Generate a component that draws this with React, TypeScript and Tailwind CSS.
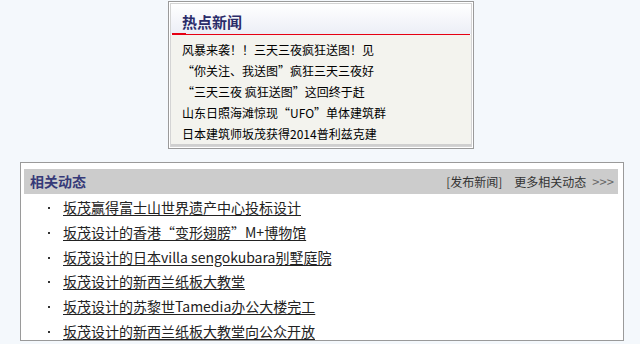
import React from 'react';

const HOT_NEWS = [
  '风暴来袭！！三天三夜疯狂送图！见',
  '“你关注、我送图”疯狂三天三夜好',
  '“三天三夜 疯狂送图”这回终于赶',
  '山东日照海滩惊现“UFO”单体建筑群',
  '日本建筑师坂茂获得2014普利兹克建',
];

const RELATED = [
  '坂茂赢得富士山世界遗产中心投标设计',
  '坂茂设计的香港“变形翅膀”M+博物馆',
  '坂茂设计的日本villa sengokubara别墅庭院',
  '坂茂设计的新西兰纸板大教堂',
  '坂茂设计的苏黎世Tamedia办公大楼完工',
  '坂茂设计的新西兰纸板大教堂向公众开放',
];

const FONT = { fontFamily: "'Noto Sans CJK SC', 'Liberation Sans', sans-serif" };

const HotNews: React.FC = () => (
  <div className="ml-[168px] mt-[1px] w-[306px] h-[148px] border border-[#9a9a9a] bg-white p-[1px]">
    <div className="flex h-full flex-col border border-[#d4d4d4]">
      {/* Header */}
      <div className="h-[30px] bg-gradient-to-b from-white to-[#eceef6] pl-[11px] pt-[8px] text-[15px] font-bold leading-[20px] text-[#2a2c6a]">
        热点新闻
      </div>
      <div className="relative ml-[1px] mr-[1px] h-[1px] bg-[#e60012]">
        <div className="absolute left-0 top-[-1px] h-[2px] w-[14px] bg-[#e60012]" />
      </div>

      {/* List */}
      <div className="flex-1 bg-[#f3f3ee] pt-[4px] border-b-2 border-[#cfcfcf]">
        {HOT_NEWS.map((item) => (
          <div key={item} className="pl-[11px] text-[12px] leading-[21px] text-black whitespace-nowrap">
            {item}
          </div>
        ))}
      </div>
    </div>
  </div>
);

const Related: React.FC = () => (
  <div className="ml-[20px] mt-[13px] h-[179px] w-[604px] overflow-hidden border border-[#9a9a9a] bg-white">
    {/* Header */}
    <div className="ml-[3px] mr-[5px] mt-[6px] flex h-[25px] items-center justify-between bg-[#cccccc] pl-[6px] pr-[4px]">
      <span className="text-[14px] font-bold text-[#363a78]">相关动态</span>
      <div className="flex items-center text-[12px] text-[#333]">
        <span>[发布新闻]</span>
        <span className="ml-[12px]">更多相关动态</span>
        <span className="ml-[6px] text-[13px] text-[#666]">&gt;&gt;&gt;</span>
      </div>
    </div>

    {/* List */}
    <ul className="mt-[1px]">
      {RELATED.map((item) => (
        <li key={item} className="flex h-[24.7px] items-center">
          <div className="ml-[27px] mt-[2px] h-[2px] w-[2px] bg-[#333]" />
          <a className="ml-[13px] text-[14px] leading-[20px] text-[#222] underline underline-offset-2 whitespace-nowrap">
            {item}
          </a>
        </li>
      ))}
    </ul>
  </div>
);

export default function App() {
  return (
    <div className="h-[344px] w-[640px] overflow-hidden bg-[#f4f8fc]" style={FONT}>
      <HotNews />
      <Related />
    </div>
  );
}
